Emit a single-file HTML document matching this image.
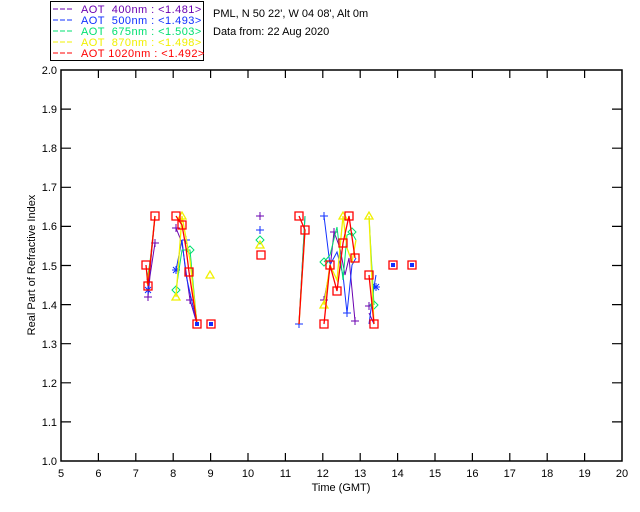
<!DOCTYPE html>
<html><head><meta charset="utf-8"><style>
html,body{margin:0;padding:0;background:#fff;width:640px;height:512px;overflow:hidden}
svg text{font-family:"Liberation Sans",sans-serif;font-size:11px}
</style></head><body>
<svg width="640" height="512" xmlns="http://www.w3.org/2000/svg">
<rect x="50.5" y="1.5" width="153" height="59" fill="none" stroke="#000" stroke-width="1"/>
<g font-size="11" letter-spacing="0.45">
<line x1="53" y1="9" x2="74" y2="9" stroke="#6a00b0" stroke-dasharray="5,2"/><text x="81" y="13" fill="#6a00b0" xml:space="preserve">AOT  400nm : &lt;1.481&gt;</text>
<line x1="53" y1="20" x2="74" y2="20" stroke="#1030ff" stroke-dasharray="5,2"/><text x="81" y="24" fill="#1030ff" xml:space="preserve">AOT  500nm : &lt;1.493&gt;</text>
<line x1="53" y1="31" x2="74" y2="31" stroke="#00e070" stroke-dasharray="5,2"/><text x="81" y="35" fill="#00e070" xml:space="preserve">AOT  675nm : &lt;1.503&gt;</text>
<line x1="53" y1="42" x2="74" y2="42" stroke="#f0f000" stroke-dasharray="5,2"/><text x="81" y="46" fill="#f0f000" xml:space="preserve">AOT  870nm : &lt;1.498&gt;</text>
<line x1="53" y1="53" x2="74" y2="53" stroke="#ff0000" stroke-dasharray="5,2"/><text x="81" y="57" fill="#ff0000" xml:space="preserve">AOT 1020nm : &lt;1.492&gt;</text>
</g>
<text x="213" y="17" font-size="10.5">PML, N 50 22', W 04 08', Alt 0m</text>
<text x="213" y="35" font-size="10.5">Data from: 22 Aug 2020</text>

<rect x="61" y="70" width="561" height="391" fill="none" stroke="#000" stroke-width="1.5"/>
<g stroke="#000" stroke-width="1.2">
<path d="M98.4 461v-8M135.8 461v-8M173.2 461v-8M210.6 461v-8M248 461v-8M285.4 461v-8M322.8 461v-8M360.2 461v-8M397.6 461v-8M435 461v-8M472.4 461v-8M509.8 461v-8M547.2 461v-8M584.6 461v-8"/>
<path d="M98.4 70v8M135.8 70v8M173.2 70v8M210.6 70v8M248 70v8M285.4 70v8M322.8 70v8M360.2 70v8M397.6 70v8M435 70v8M472.4 70v8M509.8 70v8M547.2 70v8M584.6 70v8"/>
<path d="M61 421.9h10M61 382.8h10M61 343.7h10M61 304.6h10M61 265.5h10M61 226.4h10M61 187.3h10M61 148.2h10M61 109.1h10"/>
<path d="M622 421.9h-10M622 382.8h-10M622 343.7h-10M622 304.6h-10M622 265.5h-10M622 226.4h-10M622 187.3h-10M622 148.2h-10M622 109.1h-10"/>
</g>
<g text-anchor="end">
<text x="57" y="465">1.0</text><text x="57" y="426">1.1</text><text x="57" y="387">1.2</text><text x="57" y="348">1.3</text><text x="57" y="309">1.4</text><text x="57" y="270">1.5</text><text x="57" y="230">1.6</text><text x="57" y="191">1.7</text><text x="57" y="152">1.8</text><text x="57" y="113">1.9</text><text x="57" y="74">2.0</text>
</g>
<g text-anchor="middle">
<text x="61" y="477">5</text><text x="98.4" y="477">6</text><text x="135.8" y="477">7</text><text x="173.2" y="477">8</text><text x="210.6" y="477">9</text><text x="248" y="477">10</text><text x="285.4" y="477">11</text><text x="322.8" y="477">12</text><text x="360.2" y="477">13</text><text x="397.6" y="477">14</text><text x="435" y="477">15</text><text x="472.4" y="477">16</text><text x="509.8" y="477">17</text><text x="547.2" y="477">18</text><text x="584.6" y="477">19</text><text x="622" y="477">20</text>
<text x="341" y="491">Time (GMT)</text>
<text transform="translate(35 265) rotate(-90)">Real Part of Refractive Index</text>
</g>

<g fill="none" stroke="#6a00b0" stroke-width="1">
<polyline points="148,297 150,276 155,243"/>
<polyline points="176,228 182,243 190,300 197,324"/>
<polyline points="324,300 330,269 334,232 340,248 345,275 349,258 355,321"/>
<polyline points="369,313 374,324"/>
<path d="M144 297h8M148 293v8M151 243h8M155 239v8M172 228h8M176 224v8M186 300h8M190 296v8M256 216h8M260 212v8M320 300h8M324 296v8M330 232h8M334 228v8M351 321h8M355 317v8M365 306h8M369 302v8"/>
</g>
<g fill="none" stroke="#1030ff" stroke-width="1">
<polyline points="148,290 150,270 155,216"/>
<polyline points="176,270 182,240 186,275 197,324"/>
<polyline points="305,216 299,324"/>
<polyline points="324,216 330,265 337,252 343,275 347,313 352,265 356,258"/>
<polyline points="369,324 374,287 376,275"/>
<path d="M144 290h8M148 286v8M145 287l6 6M151 287l-6 6M172 270h8M176 266v8M173 267l6 6M179 267l-6 6M182 240h8M186 236v8M256 230h8M260 226v8M295 324h8M299 320v8M320 216h8M324 212v8M343 313h8M347 309v8M372 287h8M376 283v8M373 284l6 6M379 284l-6 6"/>
</g>
<g fill="none" stroke="#00e070" stroke-width="1">
<polyline points="147,280 150,262 155,216 "/>
<polyline points="176,290 182,250 190,250 197,324"/>
<polyline points="299,324 305,216"/>
<polyline points="324,262 330,255 337,227 343,280 347,235 352,233 356,240"/>
<polyline points="369,216 374,305"/>
<path d="M172 290l4 -4 4 4 -4 4zM186 250l4 -4 4 4 -4 4zM256 240l4 -4 4 4 -4 4zM320 262l4 -4 4 4 -4 4zM348 232l4 -4 4 4 -4 4zM370 305l4 -4 4 4 -4 4z"/>
</g>
<g fill="none" stroke="#f0f000" stroke-width="1.3">
<polyline points="147,284 150,265 155,216"/>
<polyline points="176,297 182,216 190,260 197,324"/>
<polyline points="299,324 305,230"/>
<polyline points="324,305 330,265 337,280 343,216 347,248 352,262 356,240"/>
<polyline points="369,216 374,324"/>
<path d="M172 300l4-7 4 7zM178 219l4-7 4 7zM206 278l4-7 4 7zM256 248l4-7 4 7zM320 308l4-7 4 7zM339 219l4-7 4 7zM365 219l4-7 4 7z"/>
</g>
<g fill="none" stroke="#ff0000" stroke-width="1.3">
<polyline points="146,265 148,286 155,216"/>
<polyline points="176,216 182,225 186,248 189,272 197,324"/>
<polyline points="299,216 305,230 299,324"/>
<polyline points="324,324 330,265 337,291 343,243 349,216 355,258"/>
<polyline points="369,275 374,324"/>
<path d="M142 261h8v8h-8zM144 282h8v8h-8zM151 212h8v8h-8zM172 212h8v8h-8zM178 221h8v8h-8zM185 268h8v8h-8zM193 320h8v8h-8zM207 320h8v8h-8zM257 251h8v8h-8zM295 212h8v8h-8zM301 226h8v8h-8zM320 320h8v8h-8zM326 261h8v8h-8zM333 287h8v8h-8zM339 239h8v8h-8zM345 212h8v8h-8zM351 254h8v8h-8zM365 271h8v8h-8zM370 320h8v8h-8zM389 261h8v8h-8zM408 261h8v8h-8z"/>
</g>
<g fill="#1030ff"><rect x="391" y="263" width="4" height="4"/><rect x="410" y="263" width="4" height="4"/><rect x="195" y="322" width="4" height="4"/><rect x="209" y="322" width="4" height="4"/></g>
</svg>
</body></html>
